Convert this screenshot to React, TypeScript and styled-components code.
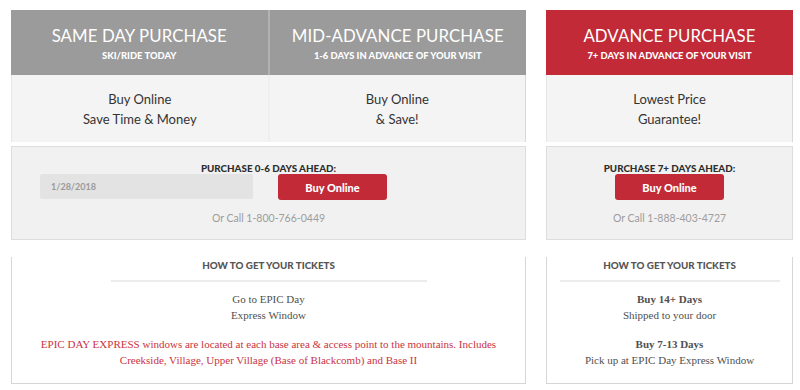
import styled, { createGlobalStyle } from "styled-components";

const GlobalStyle = createGlobalStyle`
    body {
        margin: 0;
        background: #ffffff;
        font-family: Lato, "Open Sans", Arial, sans-serif;
    }
`;

const Page = styled.div`
    display: flex;
    gap: 20px;
    padding: 10px 0 0 11px;
`;

const Panel = styled.div<{ $width: number }>`
    width: ${({ $width }) => $width}px;
    display: flex;
    flex-direction: column;
`;

const Card = styled.div`
    display: flex;
`;

const Column = styled.div<{ $divider?: boolean }>`
    flex: 1;
    display: flex;
    flex-direction: column;
    border-right: ${({ $divider }) => ($divider ? "2px solid #efefef" : "none")};
`;

const Header = styled.div<{ $red?: boolean; $divider?: boolean }>`
    height: 65px;
    box-sizing: border-box;
    padding-top: 15px;
    margin-right: ${({ $divider }) => ($divider ? "-2px" : "0")};
    border-right: ${({ $divider }) => ($divider ? "2px solid #b2b2b2" : "none")};
    background: ${({ $red }) => ($red ? "#c12a36" : "#9b9b9b")};
    color: #ffffff;
    text-align: center;
`;

const Title = styled.div`
    font-size: 16.8px;
    line-height: 22px;
    font-weight: 400;
    letter-spacing: 0.1px;
`;

const Subtitle = styled.div`
    margin-top: 3px;
    font-size: 9.4px;
    line-height: 12px;
    font-weight: 900;
`;

const Body = styled.div<{ $left?: boolean; $right?: boolean }>`
    height: 67px;
    box-sizing: border-box;
    padding-top: 14px;
    background: #f4f4f4;
    border-left: ${({ $left }) => ($left ? "1px solid #e6e6e6" : "none")};
    border-right: ${({ $right }) => ($right ? "1px solid #d8d8d8" : "none")};
    color: #333333;
    text-align: center;
    font-size: 13px;
    line-height: 20px;
`;

const PurchaseBox = styled.div`
    margin-top: 4px;
    height: 94px;
    box-sizing: border-box;
    padding-top: 15px;
    background: #f1f1f1;
    border: 1px solid #dddddd;
    display: flex;
    flex-direction: column;
    align-items: center;
`;

const SmallHeading = styled.div<{ $color?: string }>`
    font-size: 9.8px;
    line-height: 12px;
    font-weight: 900;
    color: ${({ $color }) => $color ?? "#2e2e2e"};
    text-align: center;
`;

const Row = styled.div<{ $start?: boolean }>`
    align-self: ${({ $start }) => ($start ? "flex-start" : "center")};
    margin-left: ${({ $start }) => ($start ? "28px" : "0")};
    display: flex;
    gap: 25px;
`;

const DateField = styled.div`
    width: 213px;
    height: 25px;
    box-sizing: border-box;
    padding-left: 11px;
    background: #e3e3e3;
    border-radius: 2px;
    color: #9a9a9a;
    font-size: 9px;
    font-weight: 700;
    line-height: 25px;
`;

const BuyButton = styled.button`
    width: 109px;
    height: 26px;
    border: none;
    border-radius: 3px;
    background: #c12a36;
    color: #ffffff;
    font-family: Lato, "Open Sans", Arial, sans-serif;
    font-size: 11px;
    font-weight: 900;
    padding: 0;
    cursor: pointer;
`;

const CallText = styled.div`
    margin-top: 10px;
    font-size: 10.5px;
    line-height: 16px;
    color: #9d9d9d;
`;

const TicketsBox = styled.div`
    margin-top: 17px;
    height: 127px;
    box-sizing: border-box;
    padding-top: 2px;
    background: #ffffff;
    border: 1px solid #d6d6d6;
    border-top: none;
    display: flex;
    flex-direction: column;
    align-items: center;
`;

const Rule = styled.div<{ $width: number }>`
    width: ${({ $width }) => $width}px;
    height: 2px;
    margin: 9px 0 10px;
    background: #ececec;
`;

const Para = styled.p<{ $red?: boolean }>`
    margin: 0 0 14px;
    font-family: "Liberation Serif", "Times New Roman", serif;
    font-size: 11px;
    line-height: 15.5px;
    color: ${({ $red }) => ($red ? "#cb3340" : "#505050")};
    text-align: center;
`;

const Strong = styled.span`
    font-weight: 700;
`;

export default function App() {
    return (
        <>
            <GlobalStyle />
            <Page>
                <Panel $width={515}>
                    <Card>
                        <Column $divider>
                            <Header $divider>
                                <Title>SAME DAY PURCHASE</Title>
                                <Subtitle>SKI/RIDE TODAY</Subtitle>
                            </Header>
                            <Body $left>
                                Buy Online
                                <br />
                                Save Time &amp; Money
                            </Body>
                        </Column>
                        <Column>
                            <Header>
                                <Title>MID-ADVANCE PURCHASE</Title>
                                <Subtitle>1-6 DAYS IN ADVANCE OF YOUR VISIT</Subtitle>
                            </Header>
                            <Body $right>
                                Buy Online
                                <br />
                                &amp; Save!
                            </Body>
                        </Column>
                    </Card>
                    <PurchaseBox>
                        <SmallHeading>PURCHASE 0-6 DAYS AHEAD:</SmallHeading>
                        <Row $start>
                            <DateField>1/28/2018</DateField>
                            <BuyButton>Buy Online</BuyButton>
                        </Row>
                        <CallText>Or Call 1-800-766-0449</CallText>
                    </PurchaseBox>
                    <TicketsBox>
                        <SmallHeading $color="#555555">HOW TO GET YOUR TICKETS</SmallHeading>
                        <Rule $width={316} />
                        <Para>
                            Go to EPIC Day
                            <br />
                            Express Window
                        </Para>
                        <Para $red>
                            EPIC DAY EXPRESS windows are located at each base area &amp; access point to the mountains. Includes
                            <br />
                            Creekside, Village, Upper Village (Base of Blackcomb) and Base II
                        </Para>
                    </TicketsBox>
                </Panel>
                <Panel $width={247}>
                    <Card>
                        <Column>
                            <Header $red>
                                <Title>ADVANCE PURCHASE</Title>
                                <Subtitle>7+ DAYS IN ADVANCE OF YOUR VISIT</Subtitle>
                            </Header>
                            <Body $left $right>
                                Lowest Price
                                <br />
                                Guarantee!
                            </Body>
                        </Column>
                    </Card>
                    <PurchaseBox>
                        <SmallHeading>PURCHASE 7+ DAYS AHEAD:</SmallHeading>
                        <Row>
                            <BuyButton>Buy Online</BuyButton>
                        </Row>
                        <CallText>Or Call 1-888-403-4727</CallText>
                    </PurchaseBox>
                    <TicketsBox>
                        <SmallHeading $color="#555555">HOW TO GET YOUR TICKETS</SmallHeading>
                        <Rule $width={220} />
                        <Para>
                            <Strong>Buy 14+ Days</Strong>
                            <br />
                            Shipped to your door
                        </Para>
                        <Para>
                            <Strong>Buy 7-13 Days</Strong>
                            <br />
                            Pick up at EPIC Day Express Window
                        </Para>
                    </TicketsBox>
                </Panel>
            </Page>
        </>
    );
}
